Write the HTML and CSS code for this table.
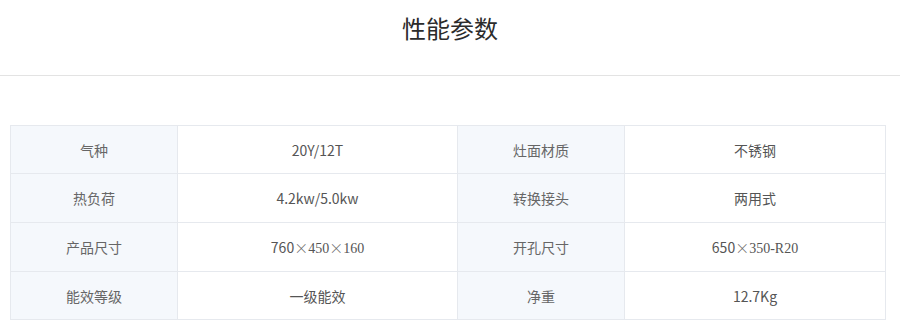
FILE: index.html
```html
<!DOCTYPE html>
<html lang="zh">
<head>
<meta charset="utf-8">
<title>性能参数</title>
<link rel="stylesheet" href="styles.css">
</head>
<body>
<header class="head"><h2 class="title">性能参数</h2></header>
<section class="params">
<table class="spec">
<colgroup><col class="c1"><col class="c2"><col class="c3"><col class="c4"></colgroup>
<tbody>
<tr><th>气种</th><td>20Y/12T</td><th>灶面材质</th><td>不锈钢</td></tr>
<tr><th>热负荷</th><td>4.2kw/5.0kw</td><th>转换接头</th><td>两用式</td></tr>
<tr><th>产品尺寸</th><td>760<span class="x">×</span><span class="serif">450</span><span class="x">×</span><span class="serif">160</span></td><th>开孔尺寸</th><td>650<span class="x">×</span><span class="serif">350-R20</span></td></tr>
<tr><th>能效等级</th><td>一级能效</td><th>净重</th><td>12.7Kg</td></tr>
</tbody>
</table>
</section>
</body>
</html>
```
FILE: styles.css
```css
html, body {
  margin: 0;
  padding: 0;
  background: #ffffff;
}
body {
  font-family: "Noto Sans CJK SC", "Noto Sans", sans-serif;
  color: #555;
}
.head {
  padding: 12px 0 31px;
  border-bottom: 1px solid #e3e3e3;
}
.title {
  margin: 0;
  text-align: center;
  font-size: 24px;
  line-height: 32px;
  font-weight: 400;
  color: #2b2b2b;
}
.params {
  padding: 49px 0 0 10px;
}
.spec {
  width: 875px;
  border-collapse: collapse;
  table-layout: fixed;
  font-size: 14px;
}
.c1, .c3 { width: 167px; }
.c2 { width: 280px; }
.c4 { width: 261px; }
.spec th, .spec td {
  border: 1px solid #e6e9ee;
  text-align: center;
  vertical-align: middle;
  padding: 0;
  height: 48px;
  font-weight: 400;
}
.spec tr:first-child th, .spec tr:first-child td,
.spec tr:last-child th, .spec tr:last-child td {
  height: 47px;
}
.spec th {
  background: #f5f8fc;
  color: #666;
}
.spec td {
  color: #555;
  background: #fff;
}
.serif {
  font-family: "Liberation Serif", serif;
  font-size: 14px;
}
.x {
  font-family: "Noto Sans CJK SC", sans-serif;
  font-weight: 300;
  font-size: 14px;
  color: #666;
}
```
